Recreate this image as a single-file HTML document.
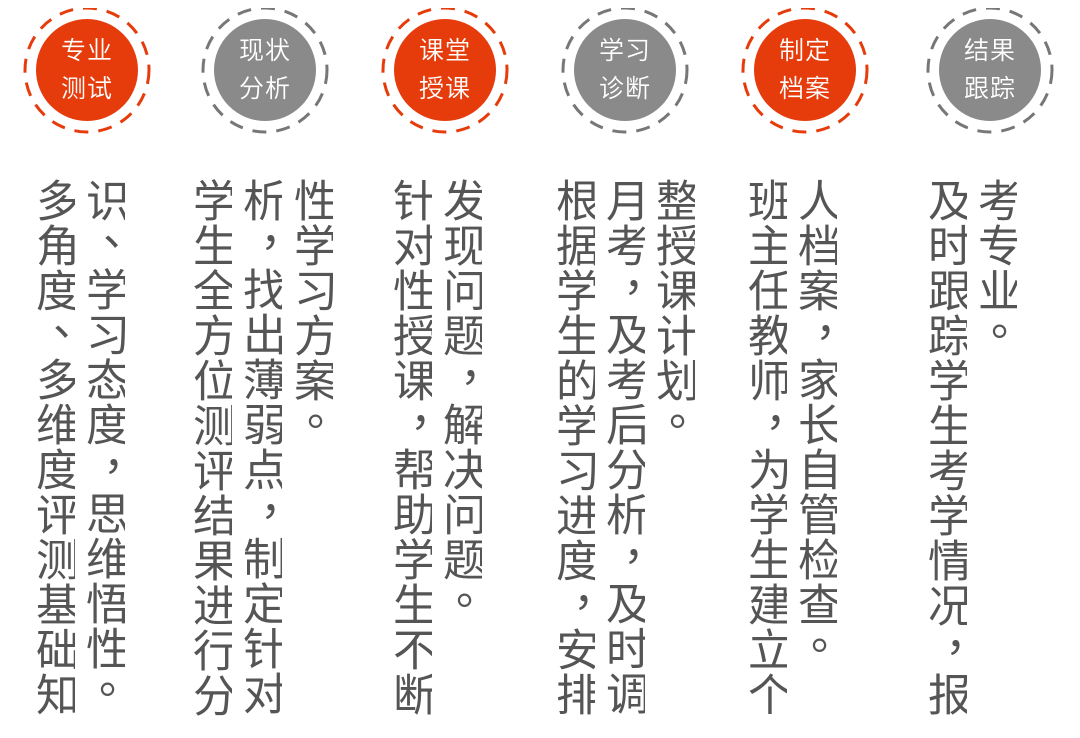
<!DOCTYPE html>
<html><head><meta charset="utf-8"><style>
body{margin:0;width:1080px;height:725px;overflow:hidden;background:#fff;position:relative;font-family:"Liberation Sans","Noto Sans CJK SC",sans-serif}
.c{position:absolute;top:8px;width:128px;height:128px}
.c svg{position:absolute;left:0;top:0}
.c .t{position:absolute;left:0;top:0;width:128px;height:124px;display:flex;flex-direction:column;justify-content:center;align-items:center;color:#fff;font-size:25px;line-height:38px;letter-spacing:1px;font-weight:350}
.v{position:absolute;top:178px;width:44px;writing-mode:vertical-lr;font-size:44px;line-height:44px;letter-spacing:1px;color:#555;height:560px;overflow:hidden;white-space:nowrap;font-weight:400}
.v i{font-style:normal;display:inline-block;writing-mode:horizontal-tb;width:44px;height:44px;line-height:44px;position:relative;vertical-align:top}
.v i b{font-weight:400;position:absolute;left:22px;top:-14px}
.v i.pd b{left:18px;top:-14px}
</style></head><body>
<div class="c" style="left:23px"><svg width="128" height="128"><circle cx="64" cy="62" r="62" fill="none" stroke="#e63c0c" stroke-width="3" stroke-dasharray="14 10"/><circle cx="64" cy="62" r="51" fill="#e63c0c"/></svg><div class="t"><div>专业</div><div>测试</div></div></div>
<div class="c" style="left:201px"><svg width="128" height="128"><circle cx="64" cy="62" r="62" fill="none" stroke="#777" stroke-width="3" stroke-dasharray="14 10"/><circle cx="64" cy="62" r="51" fill="#8a8a8a"/></svg><div class="t"><div>现状</div><div>分析</div></div></div>
<div class="c" style="left:381px"><svg width="128" height="128"><circle cx="64" cy="62" r="62" fill="none" stroke="#e63c0c" stroke-width="3" stroke-dasharray="14 10"/><circle cx="64" cy="62" r="51" fill="#e63c0c"/></svg><div class="t"><div>课堂</div><div>授课</div></div></div>
<div class="c" style="left:561px"><svg width="128" height="128"><circle cx="64" cy="62" r="62" fill="none" stroke="#777" stroke-width="3" stroke-dasharray="14 10"/><circle cx="64" cy="62" r="51" fill="#8a8a8a"/></svg><div class="t"><div>学习</div><div>诊断</div></div></div>
<div class="c" style="left:741px"><svg width="128" height="128"><circle cx="64" cy="62" r="62" fill="none" stroke="#e63c0c" stroke-width="3" stroke-dasharray="14 10"/><circle cx="64" cy="62" r="51" fill="#e63c0c"/></svg><div class="t"><div>制定</div><div>档案</div></div></div>
<div class="c" style="left:926px"><svg width="128" height="128"><circle cx="64" cy="62" r="62" fill="none" stroke="#777" stroke-width="3" stroke-dasharray="14 10"/><circle cx="64" cy="62" r="51" fill="#8a8a8a"/></svg><div class="t"><div>结果</div><div>跟踪</div></div></div>

<div class="v" style="left:31px">多角度<i><b>、</b></i>多维度评测基础知</div>
<div class="v" style="left:81px">识<i><b>、</b></i>学习态度<i><b>，</b></i>思维悟性<i class="pd"><b>。</b></i></div>

<div class="v" style="left:188px">学生全方位测评结果进行分</div>
<div class="v" style="left:238px">析<i><b>，</b></i>找出薄弱点<i><b>，</b></i>制定针对</div>
<div class="v" style="left:289px">性学习方案<i class="pd"><b>。</b></i></div>

<div class="v" style="left:388px">针对性授课<i><b>，</b></i>帮助学生不断</div>
<div class="v" style="left:438px">发现问题<i><b>，</b></i>解决问题<i class="pd"><b>。</b></i></div>

<div class="v" style="left:551px">根据学生的学习进度<i><b>，</b></i>安排</div>
<div class="v" style="left:601px">月考<i><b>，</b></i>及考后分析<i><b>，</b></i>及时调</div>
<div class="v" style="left:651px">整授课计划<i class="pd"><b>。</b></i></div>

<div class="v" style="left:743px">班主任教师<i><b>，</b></i>为学生建立个</div>
<div class="v" style="left:793px">人档案<i><b>，</b></i>家长自管检查<i class="pd"><b>。</b></i></div>

<div class="v" style="left:923px">及时跟踪学生考学情况<i><b>，</b></i>报</div>
<div class="v" style="left:973px">考专业<i class="pd"><b>。</b></i></div>
</body></html>
